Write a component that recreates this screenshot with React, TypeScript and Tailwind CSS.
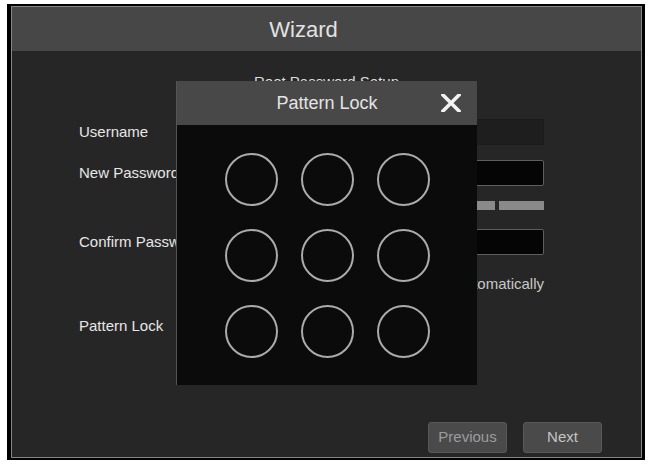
import React from 'react';

const font = { fontFamily: "'Liberation Sans', Arial, sans-serif" };

// 3x3 pattern dots
function PatternGrid() {
  return (
    <div className="grid grid-cols-3 gap-x-[23px] gap-y-[23px] self-start">
      {Array.from({ length: 9 }).map((_, i) => (
        <div key={i} className="w-[53px] h-[53px] rounded-full border-2 border-[#ababab]" />
      ))}
    </div>
  );
}

function PatternLockPopup() {
  return (
    <div className="absolute left-[164px] top-[30px] w-[301px] h-[304px] flex flex-col border-l border-[#555]">
      <div className="h-[44px] bg-[#484848] relative flex items-center justify-center">
        <span className="text-[18px] text-[#e4e4e4]">Pattern Lock</span>
        <svg className="absolute left-[264px] top-[13px]" width="20" height="18" viewBox="0 0 20 18">
          <path d="M2 1 L18 17 M18 1 L2 17" stroke="#f2f2f2" strokeWidth="3.6" strokeLinecap="square" />
        </svg>
      </div>
      <div className="flex-1 bg-[#0b0b0b] flex items-start justify-center pt-[28px]">
        <PatternGrid />
      </div>
    </div>
  );
}

export default function App() {
  return (
    <div className="w-[648px] h-[466px] bg-white pt-[4px] pl-[7px]" style={font}>
      <div className="w-[638px] h-[456px] bg-black pl-[4px] pt-[2px]">
        <div className="w-[631px] h-[452px] border border-[#858585] flex flex-col">
          {/* Header */}
          <div className="h-[44px] bg-[#474747] flex items-center justify-center pr-[46px]">
            <span className="text-[22px] text-[#e2e2e2]">Wizard</span>
          </div>

          {/* Body */}
          <div className="relative flex-1 bg-[#262626] flex flex-col">
            <div className="mt-[21px] h-[20px] leading-[20px] text-center text-[15px] text-[#dcdcdc]">
              Root Password Setup
            </div>

            <div className="ml-[67px] w-[465px] flex flex-col text-[15px] text-[#e6e6e6]">
              <div className="mt-[27px] h-[26px] flex items-center justify-between">
                <span>Username</span>
                <div className="w-[240px] h-[26px] bg-[#1e1e1e] border border-[#1b1b1b]" />
              </div>
              <div className="mt-[15px] h-[26px] flex items-center justify-between">
                <span>New Password</span>
                <div className="w-[240px] h-[26px] bg-[#050505] border border-[#5e5e5e] rounded-[2px]" />
              </div>
              <div className="mt-[15px] h-[9px] flex justify-end gap-[4px]">
                <div className="w-[45px] bg-[#8a8a8a]" />
                <div className="w-[45px] bg-[#8a8a8a]" />
                <div className="w-[45px] bg-[#8a8a8a]" />
              </div>
              <div className="mt-[19px] h-[26px] flex items-center justify-between">
                <span>Confirm Password</span>
                <div className="w-[240px] h-[26px] bg-[#050505] border border-[#5e5e5e] rounded-[2px]" />
              </div>
              <div className="mt-[19px] h-[20px] flex items-center justify-end">
                <span className="text-[#c8c8c8]">Display Automatically</span>
              </div>
              <div className="mt-[22px] h-[20px] flex items-center">
                <span>Pattern Lock</span>
              </div>
            </div>

            <div className="mt-auto mb-[4px] mr-[39px] flex justify-end gap-[16px] text-[15px]">
              <button className="w-[79px] h-[31px] rounded-[3px] bg-[#4a4a4a] border border-[#585858] text-[#9c9c9c]">
                Previous
              </button>
              <button className="w-[79px] h-[31px] rounded-[3px] bg-[#4a4a4a] border border-[#585858] text-[#c4c4c4]">
                Next
              </button>
            </div>

            <PatternLockPopup />
          </div>
        </div>
      </div>
    </div>
  );
}
